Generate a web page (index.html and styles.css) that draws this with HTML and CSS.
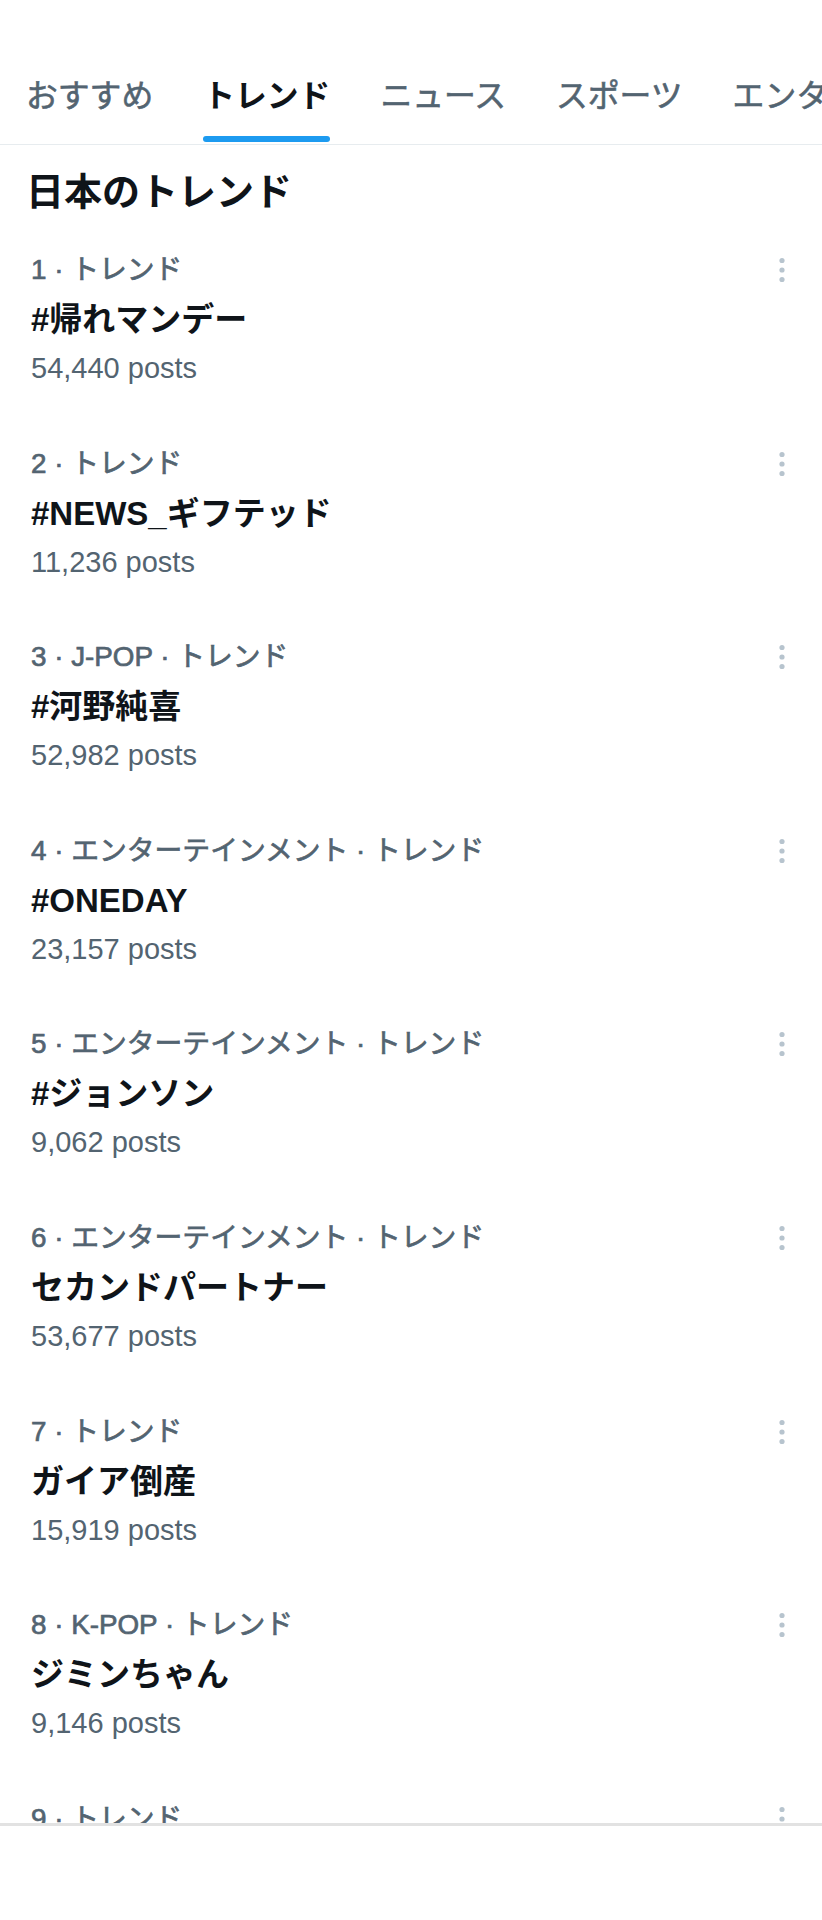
FILE: index.html
```html
<!DOCTYPE html>
<html lang="ja">
<head>
<meta charset="utf-8">
<title>トレンド</title>
<link rel="stylesheet" href="styles.css">
</head>
<body>
<div class="screen">
  <nav class="tabs">
    <div class="tab"><span class="tab-label">おすすめ</span><span class="tab-bar"></span></div>
    <div class="tab active"><span class="tab-label">トレンド</span><span class="tab-bar"></span></div>
    <div class="tab"><span class="tab-label">ニュース</span><span class="tab-bar"></span></div>
    <div class="tab"><span class="tab-label">スポーツ</span><span class="tab-bar"></span></div>
    <div class="tab"><span class="tab-label">エンターテインメント</span><span class="tab-bar"></span></div>
  </nav>
  <h1 class="heading">日本のトレンド</h1>
  <ul class="trends">
    <li class="trend">
      <div class="trend-body">
        <div class="meta">1 · トレンド</div>
        <div class="title">#帰れマンデー</div>
        <div class="count">54,440 posts</div>
      </div>
      <svg class="more" viewBox="0 0 20 30" width="20" height="30"><circle cx="10" cy="5.5" r="2.6"/><circle cx="10" cy="15" r="2.6"/><circle cx="10" cy="24.5" r="2.6"/></svg>
    </li>
    <li class="trend">
      <div class="trend-body">
        <div class="meta">2 · トレンド</div>
        <div class="title">#NEWS_ギフテッド</div>
        <div class="count">11,236 posts</div>
      </div>
      <svg class="more" viewBox="0 0 20 30" width="20" height="30"><circle cx="10" cy="5.5" r="2.6"/><circle cx="10" cy="15" r="2.6"/><circle cx="10" cy="24.5" r="2.6"/></svg>
    </li>
    <li class="trend">
      <div class="trend-body">
        <div class="meta">3 · J-POP · トレンド</div>
        <div class="title">#河野純喜</div>
        <div class="count">52,982 posts</div>
      </div>
      <svg class="more" viewBox="0 0 20 30" width="20" height="30"><circle cx="10" cy="5.5" r="2.6"/><circle cx="10" cy="15" r="2.6"/><circle cx="10" cy="24.5" r="2.6"/></svg>
    </li>
    <li class="trend">
      <div class="trend-body">
        <div class="meta">4 · エンターテインメント · トレンド</div>
        <div class="title">#ONEDAY</div>
        <div class="count">23,157 posts</div>
      </div>
      <svg class="more" viewBox="0 0 20 30" width="20" height="30"><circle cx="10" cy="5.5" r="2.6"/><circle cx="10" cy="15" r="2.6"/><circle cx="10" cy="24.5" r="2.6"/></svg>
    </li>
    <li class="trend">
      <div class="trend-body">
        <div class="meta">5 · エンターテインメント · トレンド</div>
        <div class="title">#ジョンソン</div>
        <div class="count">9,062 posts</div>
      </div>
      <svg class="more" viewBox="0 0 20 30" width="20" height="30"><circle cx="10" cy="5.5" r="2.6"/><circle cx="10" cy="15" r="2.6"/><circle cx="10" cy="24.5" r="2.6"/></svg>
    </li>
    <li class="trend">
      <div class="trend-body">
        <div class="meta">6 · エンターテインメント · トレンド</div>
        <div class="title">セカンドパートナー</div>
        <div class="count">53,677 posts</div>
      </div>
      <svg class="more" viewBox="0 0 20 30" width="20" height="30"><circle cx="10" cy="5.5" r="2.6"/><circle cx="10" cy="15" r="2.6"/><circle cx="10" cy="24.5" r="2.6"/></svg>
    </li>
    <li class="trend">
      <div class="trend-body">
        <div class="meta">7 · トレンド</div>
        <div class="title">ガイア倒産</div>
        <div class="count">15,919 posts</div>
      </div>
      <svg class="more" viewBox="0 0 20 30" width="20" height="30"><circle cx="10" cy="5.5" r="2.6"/><circle cx="10" cy="15" r="2.6"/><circle cx="10" cy="24.5" r="2.6"/></svg>
    </li>
    <li class="trend">
      <div class="trend-body">
        <div class="meta">8 · K-POP · トレンド</div>
        <div class="title">ジミンちゃん</div>
        <div class="count">9,146 posts</div>
      </div>
      <svg class="more" viewBox="0 0 20 30" width="20" height="30"><circle cx="10" cy="5.5" r="2.6"/><circle cx="10" cy="15" r="2.6"/><circle cx="10" cy="24.5" r="2.6"/></svg>
    </li>
    <li class="trend">
      <div class="trend-body">
        <div class="meta">9 · トレンド</div>
        <div class="title">&nbsp;</div>
        <div class="count">&nbsp;</div>
      </div>
      <svg class="more" viewBox="0 0 20 30" width="20" height="30"><circle cx="10" cy="5.5" r="2.6"/><circle cx="10" cy="15" r="2.6"/><circle cx="10" cy="24.5" r="2.6"/></svg>
    </li>
  </ul>
</div>
<div class="bottombar"></div>
</body>
</html>
```

FILE: styles.css
```css
* { box-sizing: border-box; }
html, body {
  margin: 0;
  padding: 0;
  background: #ffffff;
}
body {
  width: 822px;
  height: 1920px;
  overflow: hidden;
  font-family: "Liberation Sans", "Noto Sans CJK JP", sans-serif;
  color: #0f1419;
}
.screen {
  height: 1823px;
  overflow: hidden;
}
.tabs {
  display: flex;
  gap: 50px;
  margin-top: 56px;
  padding-left: 26px;
  border-bottom: 1px solid #e7ecef;
  white-space: nowrap;
  overflow: hidden;
}
.tab {
  display: flex;
  flex-direction: column;
  flex: none;
  font-size: 31.8px;
  font-weight: 400;
  color: #536471;
  -webkit-text-stroke: 0.6px #536471;
}
.tab-label {
  display: block;
  line-height: 40px;
  padding-top: 20px;
}
.tab-bar {
  display: block;
  height: 6px;
  margin-top: 20px;
  margin-bottom: 2px;
  border-radius: 3px;
  background: transparent;
}
.tab.active {
  color: #0f1419;
  font-weight: 700;
  -webkit-text-stroke: 0;
}
.tab.active .tab-bar {
  background: #1d9bf0;
}
.heading {
  margin: 0;
  padding: 25px 26px 7px;
  font-size: 38px;
  line-height: 44px;
  font-weight: 700;
  color: #0f1419;
}
.trends {
  list-style: none;
  margin: 0;
  padding: 0;
}
.trend {
  display: flex;
  align-items: flex-start;
  padding: 29px 30px 28.6px 31px;
}
.trend-body {
  flex: 1;
  min-width: 0;
}
.meta {
  font-size: 27.8px;
  line-height: 40px;
  font-weight: 400;
  color: #536471;
  -webkit-text-stroke: 0.7px #536471;
  white-space: nowrap;
}
.title {
  font-size: 33px;
  line-height: 60px;
  font-weight: 700;
  color: #0f1419;
  white-space: nowrap;
}
.count {
  font-size: 29px;
  line-height: 36px;
  color: #536471;
}
.more {
  flex: none;
  margin-top: 5px;
  fill: #b7c4ce;
}
.bottombar {
  height: 97px;
  border-top: 3px solid #e2e2e2;
  background: #ffffff;
}
```
